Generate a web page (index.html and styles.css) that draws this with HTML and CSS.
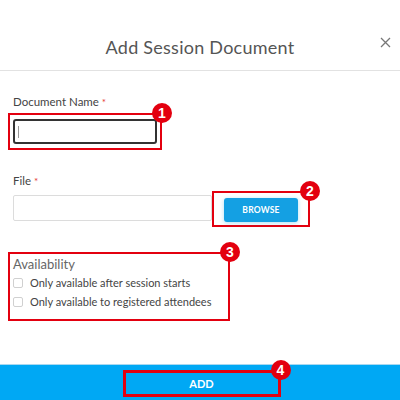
FILE: index.html
```html
<!DOCTYPE html>
<html>
<head>
<meta charset="utf-8">
<link rel="stylesheet" href="styles.css">
</head>
<body>
<div class="modal">
  <header class="header">
    <span class="spacer"></span>
    <h1 class="title">Add Session Document</h1>
    <span class="close">
      <svg width="11" height="11" viewBox="0 0 11 11"><path d="M1 1L10 10M10 1L1 10" stroke="#777" stroke-width="1.3" fill="none"/></svg>
    </span>
  </header>
  <main class="body">
    <label class="label label-name">Document Name <span class="req">*</span></label>
    <div class="mark mark-name">
      <div class="text-input"><span class="caret"></span></div>
      <span class="badge">1</span>
    </div>
    <label class="label label-file">File <span class="req">*</span></label>
    <div class="file-row">
      <div class="file-input"></div>
      <div class="mark mark-browse">
        <button class="browse">BROWSE</button>
        <span class="badge">2</span>
      </div>
    </div>
    <div class="mark mark-avail">
      <div class="avail-title">Availability</div>
      <div class="check-row"><span class="box"></span><span>Only available after session starts</span></div>
      <div class="check-row"><span class="box"></span><span>Only available to registered attendees</span></div>
      <span class="badge">3</span>
    </div>
  </main>
  <footer class="footer">
    <div class="mark mark-add">
      <span class="add">ADD</span>
      <span class="badge">4</span>
    </div>
  </footer>
</div>
</body>
</html>
```
FILE: styles.css
```css
* { box-sizing: border-box; }
html, body { margin: 0; padding: 0; background: #fff; }
body { width: 400px; height: 400px; overflow: hidden; font-family: Lato, "Noto Sans", sans-serif; color: #444; }
.modal { width: 400px; height: 400px; display: flex; flex-direction: column; }
.header {
  height: 71px;
  border-bottom: 1px solid #e2e2e2;
  display: grid;
  grid-template-columns: 1fr auto 1fr;
  padding-top: 35px;
}
.title { margin: 0; font-size: 18px; font-weight: 400; line-height: 24px; color: #555; letter-spacing: 0.25px; }
.close { justify-self: end; margin-right: 9px; margin-top: 2px; height: 11px; display: flex; }
.body { flex: 1; display: flex; flex-direction: column; align-items: flex-start; padding: 24px 0 0 0; }
.label { font-size: 11.5px; line-height: 14px; color: #444; margin-left: 13px; }
.req { color: #e53935; font-size: 10px; }
.mark { position: relative; border: 2px solid #e3000f; }
.badge {
  position: absolute;
  width: 20px; height: 20px;
  border-radius: 50%;
  background: #e3000f;
  color: #fff;
  font-family: "Liberation Sans", Arial, sans-serif;
  font-weight: 700;
  font-size: 14px;
  line-height: 20px;
  text-align: center;
  top: -12px; right: -12px;
}
.mark-name { margin: 4px 0 0 8px; padding: 4px 3px; }
.text-input {
  width: 144px; height: 25px;
  border: 2px solid #333;
  border-radius: 3px;
  display: flex; align-items: center; padding-left: 3px;
}
.caret { width: 1px; height: 12px; background: #999; }
.label-file { margin-top: 24px; }
.file-row { display: flex; align-items: flex-start; margin-top: 3px; }
.file-input { width: 199px; height: 26px; margin: 4px 0 0 13px; border: 1px solid #dcdcdc; border-radius: 2px; }
.mark-browse { padding: 4px 10px 3px 10px; }
.browse {
  width: 74px; height: 24px;
  border: none; border-radius: 3px;
  background: #14a0e3;
  color: #fff;
  font-family: Lato, sans-serif; font-weight: 700; font-size: 8.5px; letter-spacing: 0.2px;
  box-shadow: 0 1px 4px rgba(20,160,227,0.35);
  padding: 0;
}
.mark-avail { margin: 25px 0 0 8px; width: 222px; height: 69px; padding: 2px 0 0 3px; }
.avail-title { font-size: 13px; line-height: 17px; color: #666; }
.check-row { display: flex; align-items: center; gap: 7px; font-size: 11px; line-height: 19px; color: #444; }
.box { width: 10px; height: 10px; border: 1px solid #d0d0d0; border-radius: 2px; }
.footer {
  height: 36px;
  background: #00a8f4;
  border-top: 1px solid #a8d8f0;
  display: flex; justify-content: center; padding-top: 5px;
}
.mark-add { border-width: 3px; width: 158px; height: 27px; margin-left: 3px; display: flex; align-items: center; justify-content: center; }
.add { color: #fff; font-weight: 700; font-size: 11px; }
.mark-add .badge { top: -13px; right: -13px; }
```
